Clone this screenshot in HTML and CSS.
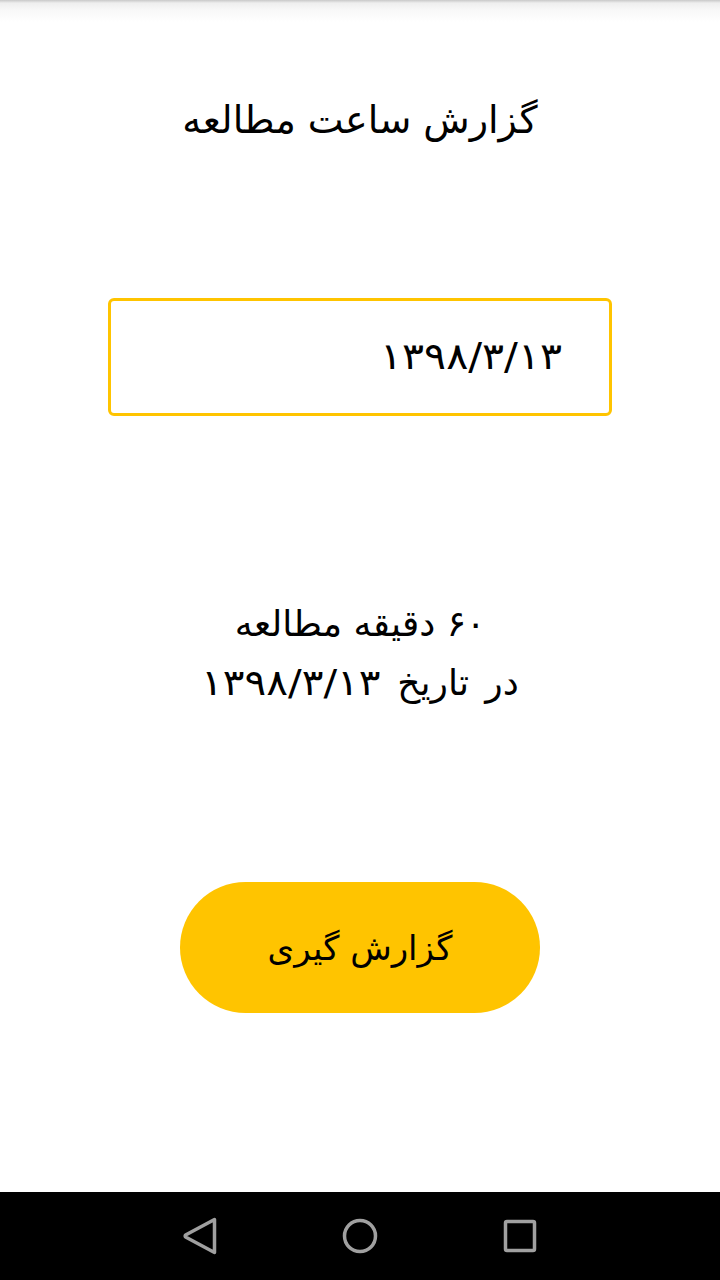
FILE: index.html
```html
<!DOCTYPE html>
<html lang="fa" dir="rtl">
<head>
<meta charset="utf-8">
<link rel="stylesheet" href="styles.css">
</head>
<body>
<div class="screen">
  <main class="content">
    <h1 class="title">گزارش ساعت مطالعه</h1>
    <div class="date-field"><span class="date-value num">۱۳۹۸/۳/۱۳</span></div>
    <div class="result">
      <div class="result-line">۶۰ دقیقه مطالعه</div>
      <div class="result-line date-line">در تاریخ <span class="num">۱۳۹۸/۳/۱۳</span></div>
    </div>
    <button class="report-btn">گزارش گیری</button>
  </main>
  <nav class="navbar" dir="ltr">
    <svg class="nav-icon" width="40" height="40" viewBox="0 0 40 40"><path d="M34.5 3.5 L34.5 36.5 L6 21.3 Q4.2 20 6 18.7 Z" fill="none" stroke="#a0a0a0" stroke-width="3.5" stroke-linejoin="round"/></svg>
    <svg class="nav-icon" width="40" height="40" viewBox="0 0 40 40"><circle cx="20" cy="20" r="15.5" fill="none" stroke="#a0a0a0" stroke-width="3.5"/></svg>
    <svg class="nav-icon" width="40" height="40" viewBox="0 0 40 40"><rect x="5.5" y="5.5" width="29" height="29" rx="1.5" fill="none" stroke="#a0a0a0" stroke-width="3.5"/></svg>
  </nav>
</div>
</body>
</html>
```
FILE: styles.css
```css
html, body {
  margin: 0;
  padding: 0;
}
body {
  width: 720px;
  height: 1280px;
  font-family: "DejaVu Sans", "Noto Sans", sans-serif;
  color: #000;
  background: #fff;
}
.screen {
  display: flex;
  flex-direction: column;
  height: 1280px;
}
.content {
  flex: 1;
  display: flex;
  flex-direction: column;
  align-items: center;
  background: linear-gradient(to bottom, #c8c8c8 0, #eeeeee 3px, #f8f8f8 10px, #ffffff 22px);
}
.title {
  margin: 96px 0 0;
  font-size: 38px;
  font-weight: normal;
  line-height: 48px;
  height: 48px;
}
.date-field {
  margin-top: 154px;
  box-sizing: border-box;
  width: 504px;
  height: 118px;
  border: 3px solid #ffc400;
  border-radius: 6px;
  display: flex;
  align-items: center;
  padding-right: 47px;
}
.num {
  display: inline-block;
  font-size: 36px;
  transform: scaleX(1.125);
  transform-origin: right center;
  margin-left: 20px;
}
.date-field .num {
  font-size: 37px;
  line-height: 40px;
  transform: scaleX(1.11);
  margin-left: 0;
}
.result {
  margin-top: 178px;
  text-align: center;
  font-size: 36px;
  line-height: 59px;
}
.result-line {
  height: 59px;
}
.date-line {
  word-spacing: 5px;
}
.report-btn {
  margin-top: 170px;
  width: 360px;
  height: 131px;
  border: none;
  border-radius: 66px;
  background: #ffc400;
  font-family: "DejaVu Sans", "Noto Sans", sans-serif;
  font-size: 34px;
  color: #000;
  padding: 0;
}
.navbar {
  height: 88px;
  background: #000;
  display: flex;
  justify-content: center;
  align-items: center;
  gap: 120px;
}
.nav-icon {
  display: block;
}
```
